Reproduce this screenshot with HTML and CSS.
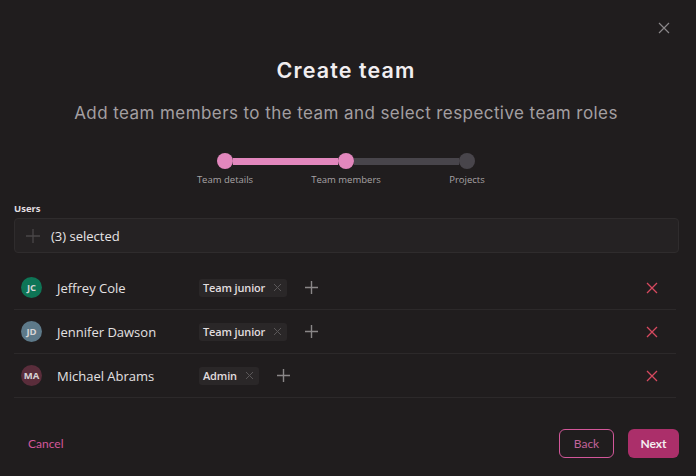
FILE: index.html
```html
<!DOCTYPE html>
<html lang="en">
<head>
<meta charset="utf-8">
<title>Create team</title>
<link rel="stylesheet" href="styles.css">
</head>
<body>
<div class="modal">
  <div class="topbar">
    <button class="close" aria-label="Close">
      <svg width="12" height="12" viewBox="0 0 12 12"><path d="M1 1L11 11M11 1L1 11" stroke="#8a8789" stroke-width="1.2" fill="none"/></svg>
    </button>
  </div>
  <h1 class="title">Create team</h1>
  <p class="subtitle">Add team members to the team and select respective team roles</p>

  <div class="stepper">
    <div class="track">
      <span class="dot on"></span>
      <span class="line on"></span>
      <span class="dot on"></span>
      <span class="line"></span>
      <span class="dot"></span>
    </div>
    <div class="labels">
      <span>Team details</span>
      <span>Team members</span>
      <span>Projects</span>
    </div>
  </div>

  <div class="field">
    <label class="field-label">Users</label>
    <div class="select">
      <svg width="16" height="16" viewBox="0 0 16 16"><path d="M8 1V15M1 8H15" stroke="#4a4748" stroke-width="1.3" fill="none"/></svg>
      <span>(3) selected</span>
    </div>
  </div>

  <ul class="members">
    <li class="member">
      <span class="avatar green">JC</span>
      <span class="name">Jeffrey Cole</span>
      <div class="roles">
        <span class="chip">Team junior <svg width="9" height="9" viewBox="0 0 9 9"><path d="M1 1L8 8M8 1L1 8" stroke="#5a5758" stroke-width="1" fill="none"/></svg></span>
        <svg class="add" width="13" height="13" viewBox="0 0 13 13"><path d="M6.5 0V13M0 6.5H13" stroke="#8a8788" stroke-width="1.4" fill="none"/></svg>
      </div>
      <svg class="remove" width="12" height="12" viewBox="0 0 12 12"><path d="M1 1L11 11M11 1L1 11" stroke="#d6495f" stroke-width="1.3" fill="none"/></svg>
    </li>
    <li class="member">
      <span class="avatar slate">JD</span>
      <span class="name">Jennifer Dawson</span>
      <div class="roles">
        <span class="chip">Team junior <svg width="9" height="9" viewBox="0 0 9 9"><path d="M1 1L8 8M8 1L1 8" stroke="#5a5758" stroke-width="1" fill="none"/></svg></span>
        <svg class="add" width="13" height="13" viewBox="0 0 13 13"><path d="M6.5 0V13M0 6.5H13" stroke="#8a8788" stroke-width="1.4" fill="none"/></svg>
      </div>
      <svg class="remove" width="12" height="12" viewBox="0 0 12 12"><path d="M1 1L11 11M11 1L1 11" stroke="#d6495f" stroke-width="1.3" fill="none"/></svg>
    </li>
    <li class="member">
      <span class="avatar maroon">MA</span>
      <span class="name">Michael Abrams</span>
      <div class="roles">
        <span class="chip">Admin <svg width="9" height="9" viewBox="0 0 9 9"><path d="M1 1L8 8M8 1L1 8" stroke="#5a5758" stroke-width="1" fill="none"/></svg></span>
        <svg class="add" width="13" height="13" viewBox="0 0 13 13"><path d="M6.5 0V13M0 6.5H13" stroke="#8a8788" stroke-width="1.4" fill="none"/></svg>
      </div>
      <svg class="remove" width="12" height="12" viewBox="0 0 12 12"><path d="M1 1L11 11M11 1L1 11" stroke="#d6495f" stroke-width="1.3" fill="none"/></svg>
    </li>
  </ul>

  <div class="footer">
    <button class="cancel">Cancel</button>
    <div class="actions">
      <button class="btn back">Back</button>
      <button class="btn next">Next</button>
    </div>
  </div>
</div>
</body>
</html>
```

FILE: styles.css
```css
* { box-sizing: border-box; }
html, body {
  margin: 0;
  padding: 0;
  background: #201d1e;
  width: 696px;
  height: 476px;
  overflow: hidden;
}
body {
  font-family: "Open Sans", "Noto Sans", sans-serif;
  color: #e6e3e4;
}
.modal {
  width: 692px;
  padding: 0 14px;
}
.topbar {
  display: flex;
  justify-content: flex-end;
  height: 55px;
  padding-top: 22px;
  padding-right: 8px;
}
.close {
  background: none;
  border: 0;
  padding: 0;
  width: 12px;
  height: 12px;
  display: flex;
}
.title {
  margin: 0;
  text-align: center;
  font-family: "Inter", "Lato", sans-serif;
  font-weight: 600;
  font-size: 21.5px;
  line-height: 30px;
  color: #f1eef0;
  letter-spacing: 1.1px;
}
.subtitle {
  margin: 17px 0 0;
  text-align: center;
  font-family: "Inter", "Lato", sans-serif;
  font-weight: 400;
  font-size: 17px;
  line-height: 22px;
  color: #a39fa1;
  letter-spacing: 0.42px;
}
.stepper {
  width: 363px;
  margin: 29px auto 0;
}
.track {
  display: flex;
  align-items: center;
  padding: 0 52.5px;
}
.dot {
  width: 16px;
  height: 16px;
  border-radius: 50%;
  background: #48454b;
  flex: none;
}
.dot.on { background: #e287bd; }
.line {
  flex: 1;
  height: 7px;
  background: #48454b;
}
.line.on { background: #e287bd; }
.labels {
  display: grid;
  grid-template-columns: repeat(3, 1fr);
  text-align: center;
  font-size: 9.5px;
  color: #a7a3a5;
  margin-top: 4px;
  line-height: 14px;
}
.field { margin-top: 15px; }
.field-label {
  display: block;
  font-size: 9.5px;
  font-weight: 700;
  color: #e0dde0;
  line-height: 13px;
  margin-bottom: 3px;
}
.select {
  display: flex;
  align-items: center;
  gap: 10px;
  height: 35px;
  width: 665px;
  padding: 0 10px;
  background: #252223;
  border: 1px solid #2f2c2d;
  border-radius: 4px;
  font-size: 13px;
  color: #e8e5e6;
}
.members {
  list-style: none;
  margin: 13px 0 0;
  padding: 0;
  width: 662px;
}
.member {
  display: flex;
  align-items: center;
  height: 44px;
  border-bottom: 1px solid #2c292a;
  padding: 0 18px 0 7px;
}
.avatar {
  width: 21px;
  height: 21px;
  border-radius: 50%;
  display: flex;
  align-items: center;
  justify-content: center;
  font-size: 9.5px;
  font-weight: 700;
  color: #d6d3d5;
  flex: none;
}
.avatar.green { background: #0e7556; }
.avatar.slate { background: #5d7989; }
.avatar.maroon { background: #5a2d3b; }
.name {
  margin-left: 15px;
  width: 142px;
  font-size: 13px;
  color: #e4e1e2;
}
.roles {
  display: flex;
  align-items: center;
  gap: 18px;
  flex: 1;
}
.chip {
  display: inline-flex;
  align-items: center;
  gap: 8px;
  height: 18px;
  padding: 0 5px 0 4px;
  background: #2a2728;
  border-radius: 3px;
  font-size: 11px;
  font-weight: 600;
  color: #e0dddf;
  letter-spacing: -0.15px;
}
.add { flex: none; }
.remove { flex: none; }
.footer {
  display: flex;
  align-items: center;
  justify-content: space-between;
  margin-top: 31px;
  padding-left: 14px;
}
.cancel {
  background: none;
  border: 0;
  padding: 0;
  font-family: "Lato", "Inter", sans-serif;
  font-size: 12px;
  color: #d3579a;
}
.actions {
  display: flex;
  gap: 14px;
  margin-right: -1px;
}
.btn {
  height: 29px;
  border-radius: 6px;
  font-family: "Lato", "Inter", sans-serif;
  font-size: 12px;
  padding: 0;
}
.back {
  width: 55px;
  background: transparent;
  border: 1px solid #d3579a;
  color: #c2639a;
}
.next {
  width: 51px;
  background: #ab2f6a;
  border: 0;
  color: #f4eef1;
  font-weight: 700;
}
```
